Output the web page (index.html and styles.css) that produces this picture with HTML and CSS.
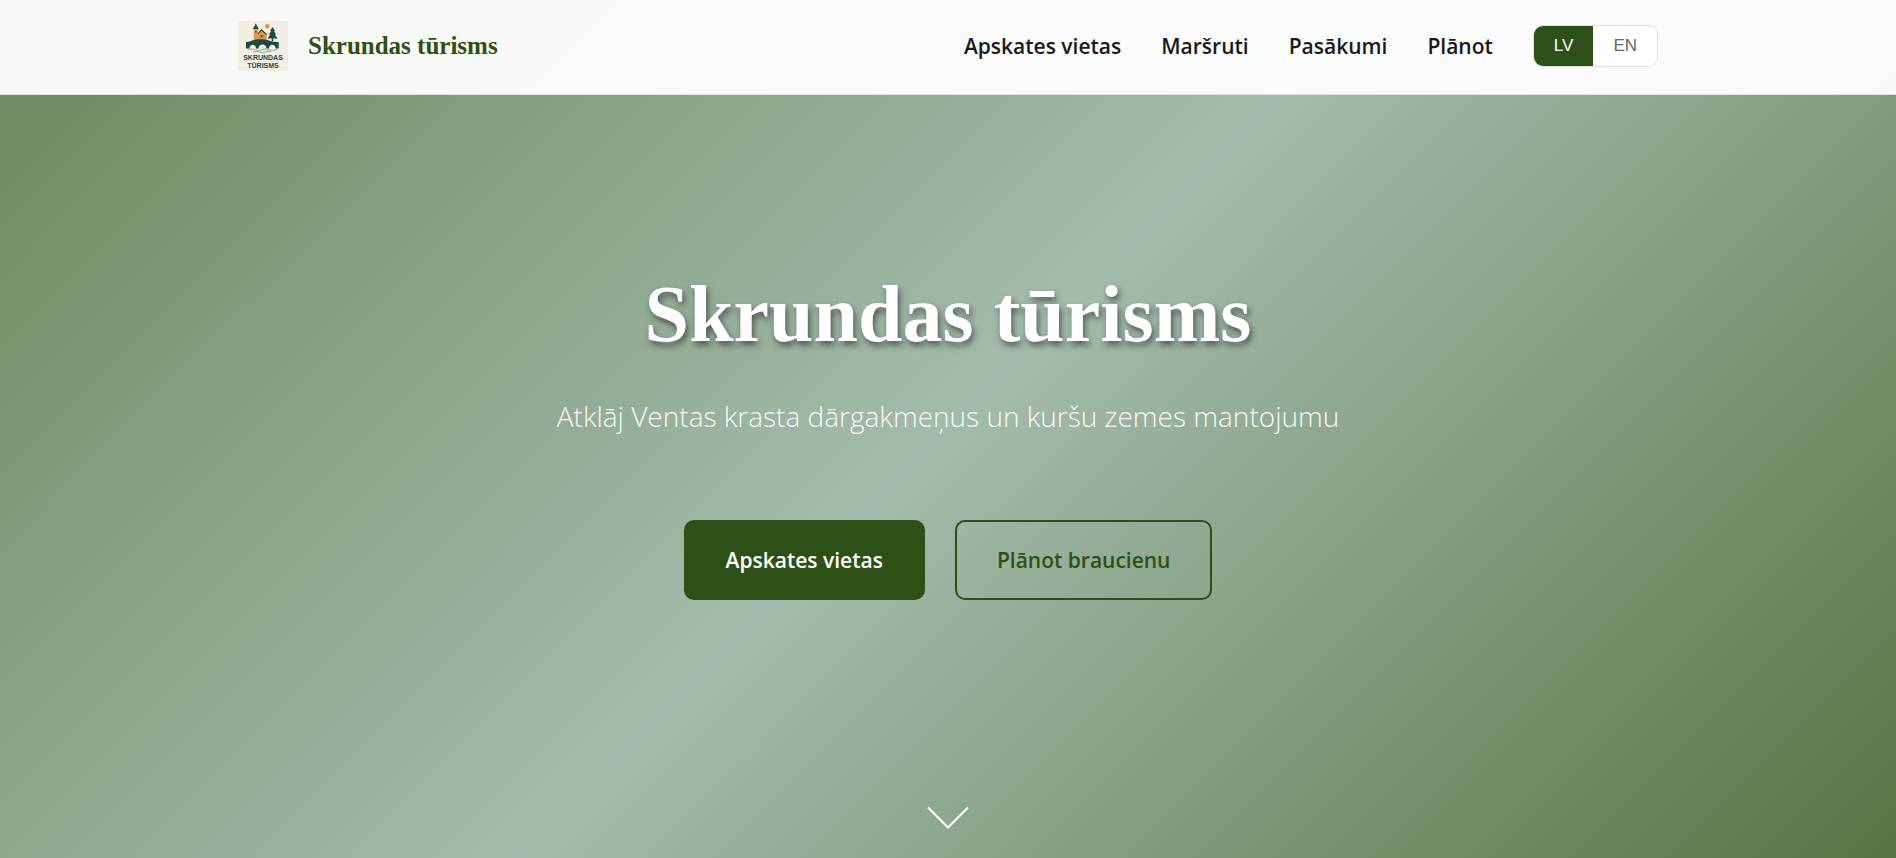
FILE: index.html
```html
<!DOCTYPE html>
<html lang="lv">
<head>
  <meta charset="utf-8">
  <meta name="viewport" content="width=device-width, initial-scale=1">
  <title>Skrundas tūrisms</title>
  <link rel="stylesheet" href="styles.css">
</head>
<body>
  <header class="site-header">
    <div class="header-inner">
      <a class="brand" href="#">
        <svg class="brand-logo" viewBox="0 0 50 50" role="img" aria-label="Skrundas tūrisms logo">
          <rect width="50" height="50" fill="#f3eee3"/>
          <circle cx="29.300" cy="5.200" r="2.200" fill="#e8954a"/>
          <path d="M15.700 8h4.300v4l3.500-3.500 5.200 5V19H15.700z" fill="#e39a45"/>
          <path d="M17.800 2.500l2.900 5.500h-5.800zM19.500 12.800l4-4.800 5.500 5.200-.8.700-4.700-4.200-3.300 3.800z" fill="#1f4a42"/>
          <path d="M17.200 10h1.200v1.800h-1.200zM22.700 14h1.700v2.500h-1.700z" fill="#1f4a42"/>
          <path d="M34.500 6l2.500 4h-1.200l2.400 3.500h-1.400l2.700 4h-4.300V20h-1.400v-2.500h-4.300l2.700-4h-1.400l2.400-3.500H32z" fill="#1f4a42"/>
          <path d="M8 21c4 0 6-1.800 9-2.300 5-.8 10-.6 14 .8 3.500 1.200 6 1.500 9.700 1.500v6.500h-3c0-5-6.700-5-6.700 0h-2.500c0-5.500-8-5.500-8 0H18c0-5-6.500-5-6.500 0H8z" fill="#1f4a42"/>
          <path d="M10 28.700q3.500-1.500 7 0t7 0 7 0 8 0M15 30.900q3-1.300 6 0t6 0 6 0" fill="none" stroke="#79aeb5" stroke-width="1"/>
          <text class="logo-text" x="25" y="39">SKRUNDAS</text>
          <text class="logo-text" x="25" y="47">TŪRISMS</text>
        </svg>
        <span class="brand-name">Skrundas tūrisms</span>
      </a>
      <div class="header-right">
        <nav class="main-nav" aria-label="Galvenā navigācija">
          <a href="#vietas">Apskates vietas</a>
          <a href="#marsruti">Maršruti</a>
          <a href="#pasakumi">Pasākumi</a>
          <a href="#planot">Plānot</a>
        </nav>
        <div class="lang-switch">
          <button class="lang-button active" type="button">LV</button>
          <button class="lang-button" type="button">EN</button>
        </div>
      </div>
    </div>
  </header>
  <main class="hero">
    <h1 class="hero-title">Skrundas tūrisms</h1>
    <p class="hero-subtitle">Atklāj Ventas krasta dārgakmeņus un kuršu zemes mantojumu</p>
    <div class="hero-actions">
      <a class="button button-primary" href="#vietas">Apskates vietas</a>
      <a class="button button-outline" href="#planot">Plānot braucienu</a>
    </div>
    <a class="scroll-cue" href="#vietas" aria-label="Ritināt uz leju">
      <svg width="42" height="24" viewBox="0 0 42 24" fill="none" stroke="#fff" stroke-width="2"><path d="M1 1.500L21 21.500 41 1.500"/></svg>
    </a>
  </main>
</body>
</html>
```

FILE: styles.css
```css
* { box-sizing: border-box; }

body {
  margin: 0;
  min-height: 100vh;
  display: flex;
  flex-direction: column;
  font-family: "Open Sans", "Noto Sans", sans-serif;
  color: #1a1a1a;
  background: linear-gradient(135deg, #6c875c 0%, #a3bbac 50%, #587444 100%);
}

a { color: inherit; text-decoration: none; }

.site-header {
  background: rgba(255, 255, 255, 0.95);
  border-bottom: 1px solid #dfe3de;
}

.header-inner {
  max-width: 1500px;
  margin: 0 auto;
  padding: 21px 40px 23px;
  display: flex;
  align-items: center;
  justify-content: space-between;
}

.brand { display: flex; align-items: center; gap: 20px; }
.brand-logo { width: 50px; height: 50px; display: block; }

.logo-text {
  font: 700 7px "Liberation Sans", sans-serif;
  fill: #1f4a42;
  text-anchor: middle;
}

.brand-name {
  font: 700 25px/32px "Liberation Serif", serif;
  color: #2d5016;
}

.header-right { display: flex; align-items: center; gap: 40px; }
.main-nav { display: flex; gap: 40px; font-size: 21px; font-weight: 600; line-height: 32px; }

.lang-switch {
  display: flex;
  overflow: hidden;
  border: 1px solid #e0e0e0;
  border-radius: 10px;
  background: #fff;
}

.lang-button {
  border: 0;
  padding: 0 20px;
  background: #fff;
  color: #666;
  font: 400 17px/40px "Liberation Sans", sans-serif;
}

.lang-button.active { background: #2d5016; color: #fff; }

.hero {
  flex: 1;
  display: flex;
  flex-direction: column;
  align-items: center;
  justify-content: flex-end;
  padding: 0 40px 28px;
  text-align: center;
}

.hero-title {
  margin: 0 0 24px;
  font: 700 80px/96px "Liberation Serif", serif;
  color: #fff;
  text-shadow: 2px 4px 6px rgba(0, 0, 0, 0.5);
}

.hero-subtitle {
  margin: 0 0 74px;
  font-size: 28px;
  font-weight: 300;
  line-height: 60px;
  color: rgba(255, 255, 255, 0.95);
}

.hero-actions { display: flex; gap: 30px; margin-bottom: 206px; }

.button {
  padding: 22px 40px;
  border: 2px solid #2d5016;
  border-radius: 10px;
  font-size: 21px;
  line-height: 32px;
}

.button-primary { background: #2d5016; color: #fff; font-weight: 600; }
.button-outline { color: #2d5016; font-weight: 600; }
.scroll-cue svg { display: block; }
```
